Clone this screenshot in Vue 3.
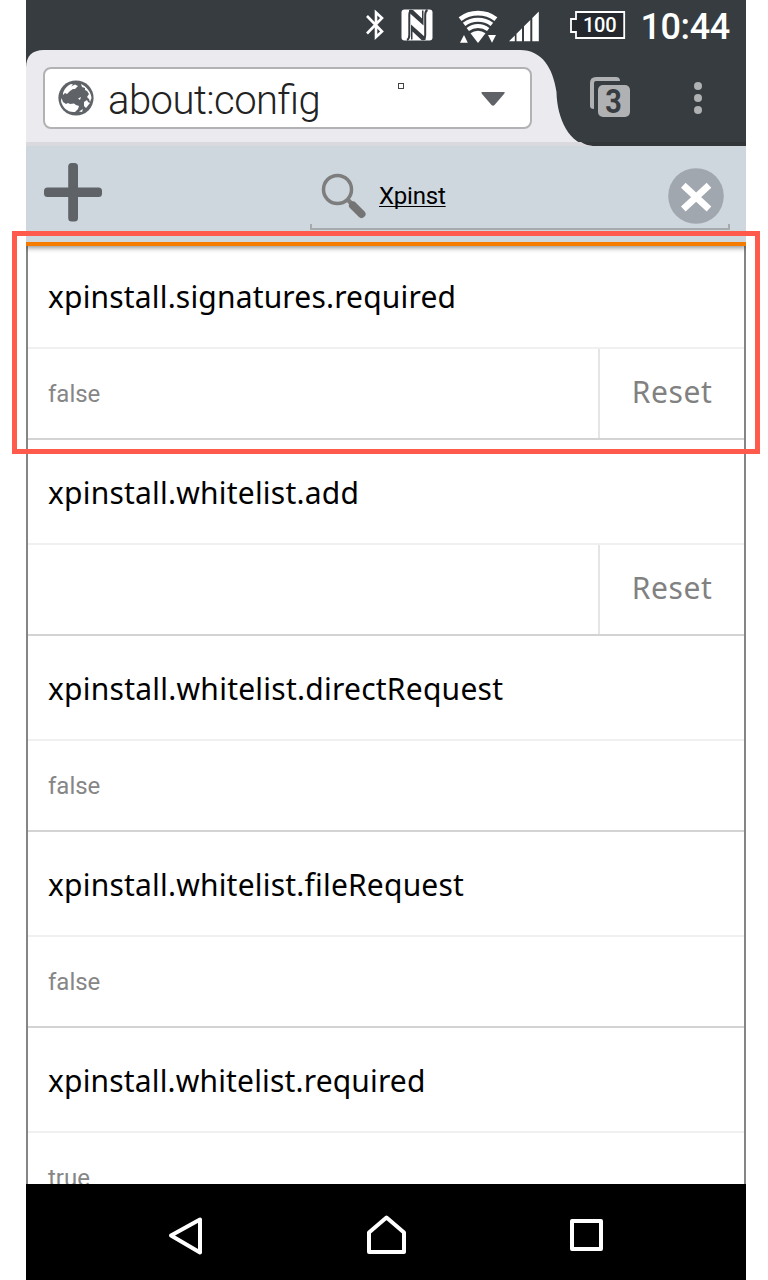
<script setup>
const prefs = [
  { name: 'xpinstall.signatures.required', value: 'false', reset: true, cls: 'n1' },
  { name: 'xpinstall.whitelist.add', value: '', reset: true, cls: 'n2' },
  { name: 'xpinstall.whitelist.directRequest', value: 'false', reset: false, cls: 'n3' },
  { name: 'xpinstall.whitelist.fileRequest', value: 'false', reset: false, cls: 'n4' },
  { name: 'xpinstall.whitelist.required', value: 'true', reset: false, cls: 'n5' },
]
</script>

<template>
  <div class="page">
    <div class="phone">
      <header class="status">
        <svg class="bt" width="20" height="32" viewBox="0 0 20 32" fill="none" stroke="#fff" stroke-width="2.6" stroke-linejoin="miter">
          <path d="M2 7 L17 22.500 L11 28 V3.500 L17 9 L2 24.500" />
        </svg>
        <svg class="nfc" width="32" height="32" viewBox="0 0 32 32">
          <rect x="0.5" y="0.5" width="31" height="31" rx="3" fill="#fff" />
          <path d="M6 31 Q8.300 30 8.300 26 V6 Q8.300 2 10.500 1.500 M26.500 1 Q24.200 2 24.200 6 V26 Q24.200 30 21.500 30.500" fill="none" stroke="#373c40" stroke-width="2" />
          <path d="M8 1 H12 L21 9.500 V1.500 H22.500 V16.500 L8 3.500 Z" fill="#373c40" />
          <path d="M24.500 31 H20.500 L11.500 22.500 V30.500 H10 V15.500 L24.500 28.500 Z" fill="#373c40" />
        </svg>
        <svg class="wifi" width="40" height="35" viewBox="0 0 40 35" fill="none" stroke="#fff">
          <path d="M2.100 10.200 A29.800 29.800 0 0 1 37.900 10.200" stroke-width="4.800" />
          <path d="M6.100 15.400 A23.200 23.200 0 0 1 33.900 15.400" stroke-width="4.100" />
          <path d="M9.800 20.400 A17 17 0 0 1 30.200 20.400" stroke-width="3.800" />
          <path d="M12.500 24.200 A12.500 12.500 0 0 1 27.500 24.200 L20 34 Z" fill="#fff" stroke="none" />
          <path d="M2 33.700 L6 26 L9.800 33.700 Z M30 26 H38 L34 33.700 Z" fill="#fff" stroke="none" />
        </svg>
        <svg class="signal" width="30" height="31" viewBox="0 0 30 31" fill="#fff">
          <path d="M0 30.200 L5.800 24.500 V30.200 Z M7.500 22.800 L13 17.300 V30.200 H7.500 Z M15 15.300 L21.300 9 V30.200 H15 Z M23.300 7 L29.800 .500 V30.200 H23.300 Z" />
        </svg>
        <div class="battery">
          <svg width="56" height="28" viewBox="0 0 56 28">
            <path d="M6 1 H54.2 V27 H6 V21 H1 V8 H6 Z" fill="#24272c" stroke="#fff" stroke-width="1.8" />
          </svg>
          <span>100</span>
        </div>
        <time>10:44</time>
      </header>

      <div class="toolbar">
        <svg class="tab" width="720" height="96" viewBox="0 0 720 96">
          <rect width="720" height="96" fill="#373c40" />
          <rect y="92" width="720" height="4" fill="#323639" />
          <path d="M0 96 V18 C0 6 6 0 18 0 H494 C516 0 527 18 530.500 42 C531 68 543 96 567 96 Z" fill="#ebeaef" />
          <path d="M0 92 H555 Q560 95.500 567 96 H0 Z" fill="#dad9de" />
        </svg>
        <div class="url">
          <svg class="globe" width="36" height="36" viewBox="0 0 36 36">
            <circle cx="18" cy="18" r="17.600" fill="#5f6368" />
            <path d="M5 13 C7 8 9 6 13 4 L15 4.500 L13 6.500 L17 4.500 L20 6 L17 9 L15 9 L12 11 L9 14 L7 13 L5 15 Z" fill="#fff" />
            <path d="M23 4 C29 7 33 12 33.500 18 L32 22 L31 19 L29 17 L31 14 L29 11 L27 10 L27 8 L24 7 Z" fill="#fff" />
            <path d="M3.500 18 L5 22 L8 24 L10 23 L12 24 L16 23.500 L18 25 L21 26 L20 29 L17 32 C10 33 4 27 3 21 Z" fill="#fff" />
            <path d="M20 18.500 L23 17 L22 20 Z M26 22 L29 20 L30 22 L32 23 L28 28 L26 26 Z M21 31.500 L25 29 L24 32 Z" fill="#fff" />
          </svg>
          <span class="address">about:config</span>
          <i class="speck"></i>
          <svg class="caret" width="24" height="14" viewBox="0 0 24 14"><path d="M1.500 0 H22.500 Q25 0 23 2 L13.500 13 Q12 14.500 10.500 13 L1 2 Q-.500 0 1.500 0 Z" fill="#5f6368" /></svg>
        </div>
        <div class="tabs">
          <svg width="40" height="40" viewBox="0 0 40 40">
            <path d="M0 32 V6 Q0 0 6 0 H26 Q30 0 30 4 H6 Q4 4 4 6 V32 Q0 32 0 29 Z" fill="#afb1b3" />
            <rect x="8" y="8" width="32" height="32" rx="5" fill="#afb1b3" />
          </svg>
          <span>3</span>
        </div>
        <svg class="dots" width="8" height="32" viewBox="0 0 8 32" fill="#afb1b3"><circle cx="4" cy="4" r="4" /><circle cx="4" cy="16" r="4" /><circle cx="4" cy="28" r="4" /></svg>
      </div>

      <div class="search">
        <svg class="plus" width="60" height="60" viewBox="0 0 60 60" fill="#5f6368"><rect x="25.200" y="1" width="9.800" height="58.500" rx="3.500" /><rect x="1" y="25.500" width="58" height="9.500" rx="3.500" /></svg>
        <div class="field">
          <svg class="lens" width="46" height="46" viewBox="0 0 46 46" fill="none" stroke="#7d7d7d">
            <circle cx="16.500" cy="16.500" r="14" stroke-width="3.500" />
            <path d="M27 27 L33 33" stroke-width="4.500" />
            <path d="M32 32.500 L40.500 41" stroke="#747474" stroke-width="8" stroke-linecap="round" />
          </svg>
          <span>Xpinst</span>
        </div>
        <svg class="clear" width="56" height="56" viewBox="0 0 56 56"><circle cx="28" cy="28" r="27.800" fill="#a1a7ae" /><path d="M15.300 17.300 L41 41 M41 17.300 L15.300 41" stroke="#fff" stroke-width="6.800" /></svg>
      </div>

      <main>
        <section v-for="p in prefs" :key="p.name" class="pref">
          <div class="name"><span :class="p.cls">{{ p.name }}</span></div>
          <div class="row">
            <div class="value">{{ p.value }}</div>
            <button v-if="p.reset">Reset</button>
          </div>
        </section>
      </main>

      <nav>
        <svg width="36" height="40" viewBox="0 0 36 40"><path d="M32 3.500 V36.500 L3 19.500 Z" /></svg>
        <svg width="40" height="40" viewBox="0 0 40 40"><path d="M2 37 V17.500 L19.500 2.500 L37 17.500 V37 Z" /></svg>
        <svg width="34" height="33" viewBox="0 0 34 33"><rect x="2" y="2" width="29" height="28" /></svg>
      </nav>
    </div>
    <div class="highlight"></div>
  </div>
</template>

<style>
body { background: #fff; }
</style>

<style scoped>
.page { position: relative; width: 768px; height: 1280px; overflow: hidden; font-family: Roboto, sans-serif; }
.phone { width: 720px; height: 1280px; margin-left: 26px; display: flex; flex-direction: column; overflow: hidden; }
svg { display: block; flex: none; }
.status { height: 50px; flex: none; background: #373c40; display: flex; align-items: flex-start; color: #fff; }
.bt { margin: 9px 0 0 339px; }
.nfc { margin: 9px 0 0 16px; }
.wifi { margin: 9px 0 0 25px; }
.signal { margin: 11px 0 0 11px; }
.battery { display: grid; margin: 11px 0 0 31px; width: 56px; height: 28px; }
.battery > * { grid-area: 1 / 1; }
.battery span { font-size: 20px; line-height: 28px; padding-left: 13px; font-weight: 500; letter-spacing: -.3px; }
time { font-size: 36px; line-height: 42px; font-weight: 500; letter-spacing: -.4px; margin: 6px 0 0 14.5px; }
.toolbar { height: 96px; flex: none; display: grid; grid-template-columns: 564px 40px 64px 52px; }
.tab { grid-area: 1 / 1 / 2 / 5; }
.url { grid-area: 1 / 1; z-index: 1; box-sizing: border-box; width: 489px; height: 62px; margin: 17px 0 0 17px; border: 2px solid #b2b2b4; border-radius: 8px; background: #fff; display: flex; align-items: flex-start; }
.globe { margin: 11px 0 0 13px; }
.address { font-size: 40px; line-height: 48px; font-weight: 300; color: #222; margin: 8px 0 0 14px; width: 216px; white-space: nowrap; letter-spacing: -.53px; font-feature-settings: "liga" 1; }
.speck { width: 4px; height: 4px; border: 1px solid #444; margin: 14px 0 0 74px; }
.caret { margin: 23px 0 0 77px; }
.tabs { grid-area: 1 / 2; z-index: 1; display: grid; width: 40px; height: 40px; margin-top: 27px; }
.tabs > * { grid-area: 1 / 1; }
.tabs span { color: #373c40; font-size: 32px; line-height: 34px; font-weight: 700; padding: 7px 0 0 8px; width: 32px; text-align: center; transform: scale(.9, 1.06); }
.dots { grid-area: 1 / 4; z-index: 1; margin-top: 32px; }
.search { height: 96px; flex: none; background: #ced6de; border-bottom: 4px solid #f57c00; box-shadow: 0 2px 5px rgba(0, 0, 0, .42); position: relative; z-index: 2; display: flex; align-items: flex-start; clip-path: inset(0 0 -12px 0); }
.plus { margin: 16px 0 0 17px; }
.field { display: flex; align-items: flex-start; box-sizing: border-box; width: 420px; height: 84px; margin-left: 207px; background: linear-gradient(#a7aaac, #a7aaac) 0 100% / 100% 2px no-repeat, linear-gradient(#a7aaac, #a7aaac) 0 100% / 2px 6px no-repeat, linear-gradient(#a7aaac, #a7aaac) 100% 100% / 2px 6px no-repeat; }
.lens { margin: 27px 0 0 11px; }
.field span { font-size: 24px; line-height: 28px; margin: 36px 0 0 12px; letter-spacing: -.2px; text-decoration: underline; text-decoration-skip-ink: none; text-decoration-thickness: 1px; text-underline-offset: 2px; }
.clear { margin: 22px 0 0 -62px; }
main { flex: 1; min-height: 0; margin-top: -2px; overflow: hidden; border: solid #858585; border-width: 0 2px; background: #fff; }
.pref { height: 194px; border-bottom: 2px solid #d3d3d3; }
.name { height: 103px; border-bottom: 2px solid #f0f0f0; padding-left: 20px; font: 30px/105px "Noto Sans", sans-serif; color: #000; white-space: nowrap; }
.n1 { letter-spacing: .17px; }
.n2 { letter-spacing: .21px; }
.n3 { letter-spacing: .24px; }
.n4 { letter-spacing: .2px; }
.n5 { letter-spacing: .16px; }
.row { height: 89px; display: flex; }
.value { flex: 1; padding-left: 20px; font-size: 24px; line-height: 90px; color: #868686; }
button { box-sizing: border-box; width: 146px; height: 89px; border: 0; border-left: 2px solid #e5e5e5; background: none; padding: 0 0 3px; font: 30px/86px "Noto Sans", sans-serif; letter-spacing: .6px; color: #818181; }
nav { height: 96px; flex: none; background: #000; display: flex; align-items: flex-start; }
nav svg { fill: none; stroke: #fff; stroke-width: 4; stroke-linejoin: round; }
nav svg:nth-child(1) { margin: 32px 0 0 142px; }
nav svg:nth-child(2) { margin: 31px 0 0 163px; }
nav svg:nth-child(3) { margin: 35px 0 0 163px; }
.highlight { position: absolute; left: 12px; top: 231px; z-index: 5; box-sizing: border-box; width: 748px; height: 223px; border: 5px solid #ff5a4c; }
</style>
